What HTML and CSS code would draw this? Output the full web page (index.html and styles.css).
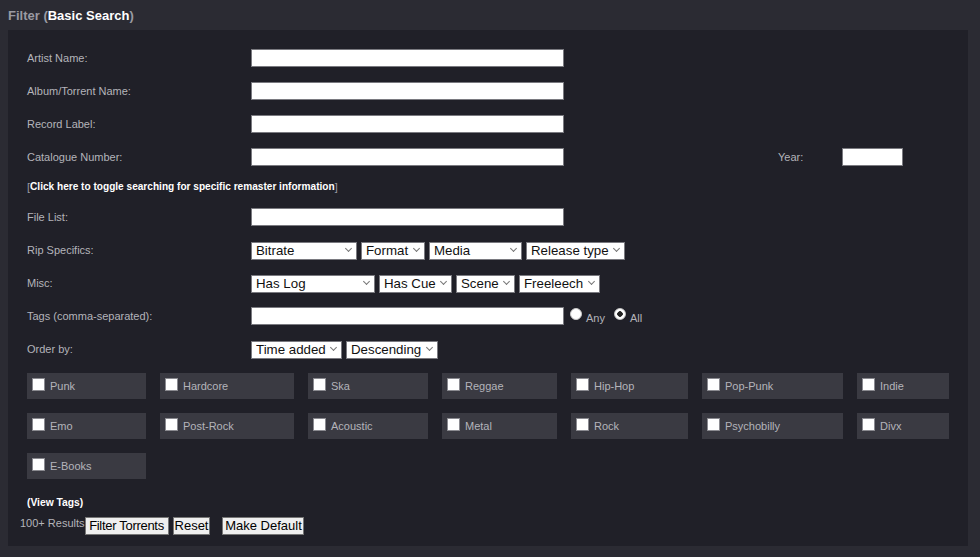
FILE: index.html
```html
<!DOCTYPE html>
<html>
<head>
<meta charset="utf-8">
<link rel="stylesheet" href="styles.css">
</head>
<body>
<h2 class="title">Filter (<span class="title-strong">Basic Search</span>)</h2>
<div class="panel">
  <div class="row">
    <label class="lbl">Artist Name:</label>
    <input class="txt" type="text">
  </div>
  <div class="row">
    <label class="lbl">Album/Torrent Name:</label>
    <input class="txt" type="text">
  </div>
  <div class="row">
    <label class="lbl">Record Label:</label>
    <input class="txt" type="text">
  </div>
  <div class="row">
    <label class="lbl">Catalogue Number:</label>
    <input class="txt" type="text">
    <label class="lbl year-lbl">Year:</label>
    <input class="txt year" type="text">
  </div>
  <div class="row row-short">
    <span class="bracket">[</span><a class="link link-remaster">Click here to toggle searching for specific remaster information</a><span class="bracket">]</span>
  </div>
  <div class="row">
    <label class="lbl">File List:</label>
    <input class="txt" type="text">
  </div>
  <div class="row">
    <label class="lbl">Rip Specifics:</label>
    <div class="sels">
      <span class="sel w-bitrate"><select><option>Bitrate</option></select></span>
      <span class="sel w-format"><select><option>Format</option></select></span>
      <span class="sel w-media"><select><option>Media</option></select></span>
      <span class="sel w-release"><select><option>Release type</option></select></span>
    </div>
  </div>
  <div class="row">
    <label class="lbl">Misc:</label>
    <div class="sels">
      <span class="sel w-log"><select><option>Has Log</option></select></span>
      <span class="sel w-cue"><select><option>Has Cue</option></select></span>
      <span class="sel w-scene"><select><option>Scene</option></select></span>
      <span class="sel w-free"><select><option>Freeleech</option></select></span>
    </div>
  </div>
  <div class="row">
    <label class="lbl">Tags (comma-separated):</label>
    <input class="txt" type="text">
    <input class="radio" type="radio" name="tt" id="any"><label class="rlbl" for="any">Any</label>
    <input class="radio" type="radio" name="tt" id="all" checked><label class="rlbl" for="all">All</label>
  </div>
  <div class="row">
    <label class="lbl">Order by:</label>
    <div class="sels">
      <span class="sel w-time"><select><option>Time added</option></select></span>
      <span class="sel w-desc"><select><option>Descending</option></select></span>
    </div>
  </div>

  <div class="genres">
    <label class="genre"><input type="checkbox" class="cb"><span>Punk</span></label>
    <label class="genre"><input type="checkbox" class="cb"><span>Hardcore</span></label>
    <label class="genre"><input type="checkbox" class="cb"><span>Ska</span></label>
    <label class="genre"><input type="checkbox" class="cb"><span>Reggae</span></label>
    <label class="genre"><input type="checkbox" class="cb"><span>Hip-Hop</span></label>
    <label class="genre"><input type="checkbox" class="cb"><span>Pop-Punk</span></label>
    <label class="genre"><input type="checkbox" class="cb"><span>Indie</span></label>
    <label class="genre"><input type="checkbox" class="cb"><span>Emo</span></label>
    <label class="genre"><input type="checkbox" class="cb"><span>Post-Rock</span></label>
    <label class="genre"><input type="checkbox" class="cb"><span>Acoustic</span></label>
    <label class="genre"><input type="checkbox" class="cb"><span>Metal</span></label>
    <label class="genre"><input type="checkbox" class="cb"><span>Rock</span></label>
    <label class="genre"><input type="checkbox" class="cb"><span>Psychobilly</span></label>
    <label class="genre"><input type="checkbox" class="cb"><span>Divx</span></label>
    <label class="genre"><input type="checkbox" class="cb"><span>E-Books</span></label>
  </div>

  <div class="viewtags"><a class="link">(View Tags)</a></div>
  <div class="footer">
    <span class="results">100+ Results</span>
    <button class="btn btn-filter">Filter Torrents</button>
    <button class="btn">Reset</button>
    <button class="btn btn-gap">Make Default</button>
  </div>
</div>
</body>
</html>
```

FILE: styles.css
```css
html, body {
  margin: 0;
  padding: 0;
}
body {
  background: #2b2b33;
  font-family: "Liberation Sans", Arial, sans-serif;
  width: 980px;
  height: 557px;
  overflow: hidden;
}
.title {
  margin: 0;
  padding: 8px 8px 0 8px;
  font-size: 13px;
  line-height: 16px;
  font-weight: bold;
  color: #9a9aa2;
}
.title-strong {
  color: #ffffff;
}
.panel {
  margin: 6px 12px 0 8px;
  background: #202028;
  padding: 11px 0 12px 19px;
  height: 493px;
}
.row {
  display: flex;
  align-items: center;
  height: 33px;
}
.row-short {
  height: 27px;
  font-size: 11px;
}
.lbl {
  width: 224px;
  flex: none;
  font-size: 11px;
  color: #b4b4ba;
}
.txt {
  box-sizing: border-box;
  width: 313px;
  height: 18px;
  margin: 0;
  padding: 0 3px;
  border: 1px solid #7a7a80;
  background: #ffffff;
  font-family: "Liberation Sans", Arial, sans-serif;
  font-size: 13px;
}
.year-lbl {
  width: 64px;
  margin-left: 214px;
}
.txt.year {
  width: 61px;
}
.bracket {
  color: #9a9aa2;
}
.link {
  color: #ffffff;
  font-weight: bold;
  font-size: 10.3px;
  cursor: pointer;
}
.link-remaster {
  font-size: 10.1px;
}
.sels {
  display: flex;
  gap: 4px;
}
.sel {
  position: relative;
  display: block;
  height: 18px;
}
.sel select {
  appearance: none;
  -webkit-appearance: none;
  box-sizing: border-box;
  width: 100%;
  height: 18px;
  margin: 0;
  padding: 0 0 0 4px;
  border: 1px solid #7a7a80;
  border-radius: 0;
  background: #ffffff;
  color: #111;
  font-family: "Liberation Sans", Arial, sans-serif;
  font-size: 13.3px;
  line-height: 16px;
}
.sel::after {
  content: "";
  position: absolute;
  right: 6px;
  top: 5px;
  width: 4px;
  height: 4px;
  border-right: 1px solid #777;
  border-bottom: 1px solid #777;
  transform: rotate(45deg);
  pointer-events: none;
}
.w-bitrate { width: 106px; }
.w-format { width: 64px; }
.w-media { width: 93px; }
.w-release { width: 99px; }
.w-log { width: 124px; }
.w-cue { width: 73px; }
.w-scene { width: 59px; }
.w-free { width: 81px; }
.w-time { width: 91px; }
.w-desc { width: 92px; }

.radio {
  appearance: none;
  -webkit-appearance: none;
  width: 12px;
  height: 12px;
  margin: 0 4px 0 6px;
  border-radius: 50%;
  background: #ffffff;
  border: 1px solid #c8c8c8;
  box-sizing: border-box;
  position: relative;
  top: -2px;
}
.radio:checked {
  background: radial-gradient(circle, #222 0 2.5px, #ffffff 3px);
}
.rlbl {
  font-size: 11px;
  color: #b4b4ba;
  margin-right: 4px;
  position: relative;
  top: 2px;
}
.rlbl + .radio {
  margin-left: 5px;
}

.genres {
  display: grid;
  grid-template-columns: 119px 134px 120px 115px 117px 141px 92px;
  grid-auto-rows: 26px;
  column-gap: 14px;
  row-gap: 14px;
  margin-top: 8px;
}
.genre {
  display: flex;
  align-items: flex-start;
  background: #3a3a42;
  padding: 5px 0 0 5px;
  box-sizing: border-box;
  font-size: 11px;
  color: #b4b4ba;
}
.genre span {
  line-height: 16px;
  margin-left: 5px;
}
.cb {
  appearance: none;
  -webkit-appearance: none;
  flex: none;
  width: 13px;
  height: 13px;
  margin: 0;
  background: #ffffff;
  border: 1px solid #8a8a90;
  box-sizing: border-box;
}
.viewtags {
  margin-top: 15px;
  line-height: 14px;
}
.footer {
  display: flex;
  align-items: center;
  margin-top: 6px;
  margin-left: -7px;
  height: 20px;
}
.results {
  font-size: 11px;
  color: #b4b4ba;
  position: relative;
  top: -3px;
}
.btn {
  box-sizing: border-box;
  height: 18px;
  margin: 0 4px 0 0;
  padding: 0 1px;
  border: 1px solid #767676;
  border-radius: 0;
  background: #efefef;
  color: #000;
  font-family: "Liberation Sans", Arial, sans-serif;
  font-size: 13px;
  line-height: 16px;
}
.btn-filter {
  width: 84px;
  padding: 0;
  letter-spacing: -0.3px;
}
.btn-gap {
  margin-left: 8px;
  width: 82px;
}
```
